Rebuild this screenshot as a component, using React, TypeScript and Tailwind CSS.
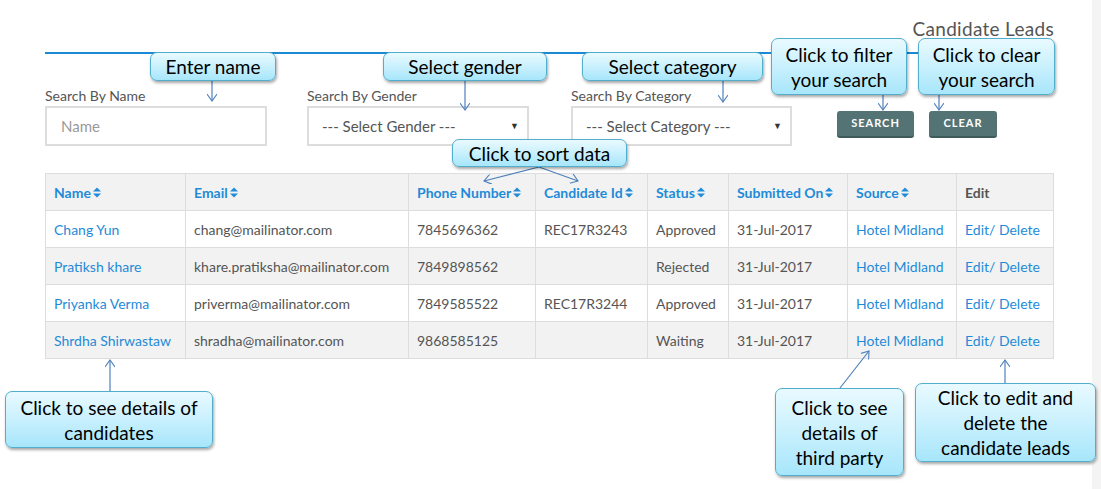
import React from "react";

type Lead = {
  name: string;
  email: string;
  phone: string;
  candidateId: string;
  status: string;
  submitted: string;
  source: string;
};

const leads: Lead[] = [
  { name: "Chang Yun", email: "chang@mailinator.com", phone: "7845696362", candidateId: "REC17R3243", status: "Approved", submitted: "31-Jul-2017", source: "Hotel Midland" },
  { name: "Pratiksh khare", email: "khare.pratiksha@mailinator.com", phone: "7849898562", candidateId: "", status: "Rejected", submitted: "31-Jul-2017", source: "Hotel Midland" },
  { name: "Priyanka Verma", email: "priverma@mailinator.com", phone: "7849585522", candidateId: "REC17R3244", status: "Approved", submitted: "31-Jul-2017", source: "Hotel Midland" },
  { name: "Shrdha Shirwastaw", email: "shradha@mailinator.com", phone: "9868585125", candidateId: "", status: "Waiting", submitted: "31-Jul-2017", source: "Hotel Midland" },
];

const columns = [
  { label: "Name", width: "w-[140px]", sortable: true },
  { label: "Email", width: "w-[223px]", sortable: true },
  { label: "Phone Number", width: "w-[127px]", sortable: true },
  { label: "Candidate Id", width: "w-[112px]", sortable: true },
  { label: "Status", width: "w-[81px]", sortable: true },
  { label: "Submitted On", width: "w-[119px]", sortable: true },
  { label: "Source", width: "w-[109px]", sortable: true },
  { label: "Edit", width: "w-[97px]", sortable: false },
];

function SortIcon() {
  return (
    <svg width="8" height="11" viewBox="0 0 8 11" className="inline-block ml-[2px] -mt-[2px] align-middle fill-current">
      <path d="M0 4.6 L4 0.4 L8 4.6 Z" />
      <path d="M0 6.4 L8 6.4 L4 10.6 Z" />
    </svg>
  );
}

function Callout({ className, children }: { className: string; children: React.ReactNode }) {
  return (
    <div
      className={`absolute flex items-center justify-center text-center rounded-[7px] border border-[#52aecd] bg-linear-to-b from-[#e9faff] to-[#a7e6fb] shadow-[1px_2px_3px_rgba(0,0,0,0.35)] text-black text-[19px] leading-[25px] font-['Lato',sans-serif] ${className}`}
    >
      <div>{children}</div>
    </div>
  );
}

function Arrows() {
  const lines: [number, number, number, number][] = [
    [212, 81, 212, 101],
    [465, 81, 465, 110],
    [723, 81, 723, 102],
    [883, 95, 883, 110],
    [939, 95, 939, 110],
    [539, 167, 484, 181],
    [539, 167, 578, 181],
    [110, 391, 110, 360],
    [840, 388, 869, 351],
    [1005, 383, 1005, 360],
  ];
  return (
    <svg className="absolute left-0 top-0 pointer-events-none" width="1101" height="489">
      <defs>
        <marker id="head" viewBox="0 0 10 10" refX="8" refY="5" markerWidth="10" markerHeight="10" markerUnits="userSpaceOnUse" orient="auto">
          <path d="M1 0 L8 5 L1 10" fill="none" stroke="#4f81bd" strokeWidth="1.1" />
        </marker>
      </defs>
      {lines.map(([x1, y1, x2, y2], i) => (
        <line key={i} x1={x1} y1={y1} x2={x2} y2={y2} stroke="#4f81bd" strokeWidth="1.2" markerEnd="url(#head)" />
      ))}
    </svg>
  );
}

function SelectBox({ text }: { text: string }) {
  return (
    <div className="h-[40px] border-2 border-[#dddddd] bg-white flex items-center pl-[13px] pr-[8px] text-[15px] text-[#555555]">
      <span className="flex-1">{text}</span>
      <span className="text-[9px] text-[#333333]">▼</span>
    </div>
  );
}

export default function App() {
  return (
    <div className="relative w-[1101px] h-[489px] overflow-hidden bg-white flex font-['Lato',sans-serif]">
      {/* Page */}
      <div className="w-[1092px] pl-[45px] pr-[38px]">
        <div className="border-b-2 border-[#1a8ad4] pt-[19px] pb-[13px]">
          <h1 className="text-right text-[19px] leading-[20px] tracking-[0.3px] text-[#555555]">Candidate Leads</h1>
        </div>

        {/* Filters */}
        <div className="flex items-start mt-[33px]">
          <div className="w-[222px]">
            <p className="text-[14px] leading-[17px] text-[#555555] mb-[2px]">Search By Name</p>
            <div className="h-[40px] border-2 border-[#dddddd] flex items-center pl-[14px] text-[15px] text-[#9a9a9a]">Name</div>
          </div>
          <div className="w-[222px] ml-[40px]">
            <p className="text-[14px] leading-[17px] text-[#555555] mb-[2px]">Search By Gender</p>
            <SelectBox text="--- Select Gender ---" />
          </div>
          <div className="w-[221px] ml-[42px]">
            <p className="text-[14px] leading-[17px] text-[#555555] mb-[2px]">Search By Category</p>
            <SelectBox text="--- Select Category ---" />
          </div>
          <div className="flex gap-[15px] ml-[45px] mt-[24px]">
            <button className="w-[77px] h-[27px] rounded-[3px] bg-[#547374] border-b-2 border-[#3f5a5b] text-white text-[11px] font-bold tracking-[1px]">SEARCH</button>
            <button className="w-[68px] h-[27px] rounded-[3px] bg-[#547374] border-b-2 border-[#3f5a5b] text-white text-[11px] font-bold tracking-[1px]">CLEAR</button>
          </div>
        </div>

        {/* Table */}
        <table className="mt-[27px] w-[1009px] table-fixed border-collapse text-[14px]">
          <colgroup>
            {columns.map((c) => (
              <col key={c.label} className={c.width} />
            ))}
          </colgroup>
          <thead>
            <tr className="bg-[#f2f2f2]">
              {columns.map((c) => (
                <th
                  key={c.label}
                  className={`h-[37px] border border-[#dddddd] pl-[8px] text-left font-bold ${c.sortable ? "text-[#1f8bd8]" : "text-[#555555]"}`}
                >
                  {c.label}
                  {c.sortable && <SortIcon />}
                </th>
              ))}
            </tr>
          </thead>
          <tbody>
            {leads.map((l, i) => (
              <tr key={l.name} className={i % 2 === 1 ? "bg-[#f2f2f2]" : "bg-white"}>
                <td className="h-[37px] border border-[#dddddd] pl-[8px] text-[#1f8bd8] whitespace-nowrap">{l.name}</td>
                <td className="border border-[#dddddd] pl-[8px] text-[#555555] whitespace-nowrap">{l.email}</td>
                <td className="border border-[#dddddd] pl-[8px] text-[#555555]">{l.phone}</td>
                <td className="border border-[#dddddd] pl-[8px] text-[#555555]">{l.candidateId}</td>
                <td className="border border-[#dddddd] pl-[8px] text-[#555555]">{l.status}</td>
                <td className="border border-[#dddddd] pl-[8px] text-[#555555]">{l.submitted}</td>
                <td className="border border-[#dddddd] pl-[8px] text-[#1f8bd8] whitespace-nowrap">{l.source}</td>
                <td className="border border-[#dddddd] pl-[8px] text-[#1f8bd8] whitespace-nowrap">Edit/ Delete</td>
              </tr>
            ))}
          </tbody>
        </table>
      </div>
      <div className="w-[9px] bg-[#f4f4f4]" />

      {/* Annotations */}
      <Arrows />
      <Callout className="left-[150px] top-[52px] w-[126px] h-[29px]">Enter name</Callout>
      <Callout className="left-[383px] top-[52px] w-[164px] h-[29px]">Select gender</Callout>
      <Callout className="left-[582px] top-[52px] w-[181px] h-[29px]">Select category</Callout>
      <Callout className="left-[771px] top-[38px] w-[136px] h-[57px]">
        Click to filter
        <br />
        your search
      </Callout>
      <Callout className="left-[918px] top-[38px] w-[137px] h-[57px]">
        Click to clear
        <br />
        your search
      </Callout>
      <Callout className="left-[452px] top-[139px] w-[175px] h-[28px]">Click to sort data</Callout>
      <Callout className="left-[5px] top-[391px] w-[208px] h-[57px]">
        Click to see details of
        <br />
        candidates
      </Callout>
      <Callout className="left-[775px] top-[388px] w-[129px] h-[88px]">
        Click to see
        <br />
        details of
        <br />
        third party
      </Callout>
      <Callout className="left-[915px] top-[383px] w-[181px] h-[79px]">
        Click to edit and
        <br />
        delete the
        <br />
        candidate leads
      </Callout>
    </div>
  );
}
